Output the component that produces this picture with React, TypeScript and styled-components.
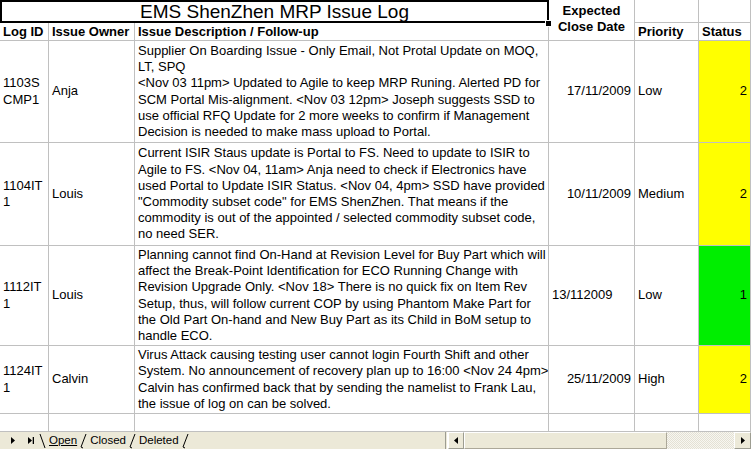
import React from 'react';
import styled, { createGlobalStyle } from 'styled-components';

const GlobalStyle = createGlobalStyle`
  html, body { margin: 0; padding: 0; background: #fff; overflow: hidden; }
  body { font-family: "Liberation Sans", Arial, sans-serif; color: #000; }
`;

const Frame = styled.div`
  width: 751px;
  height: 449px;
  display: flex;
  flex-direction: column;
  overflow: hidden;
  background: #fff;
`;

const Sheet = styled.div`
  display: grid;
  grid-template-columns: 49px 86px 414px 86px 64px 52px;
  grid-template-rows: 23px 18px 102px 103px 100px 68px 18px;
  font-size: 13px;
`;

const Cell = styled.div<{ $align?: 'left' | 'right' | 'center'; $bg?: string; $pad?: number }>`
  box-sizing: border-box;
  border-right: 1px solid #c0c0c0;
  border-bottom: 1px solid #c0c0c0;
  display: flex;
  flex-direction: column;
  justify-content: center;
  align-items: ${(p) => (p.$align === 'right' ? 'flex-end' : p.$align === 'center' ? 'center' : 'flex-start')};
  text-align: ${(p) => p.$align || 'left'};
  padding: 0 ${(p) => p.$pad ?? 3}px;
  background: ${(p) => p.$bg || '#fff'};
  line-height: 16.2px;
  white-space: nowrap;
  overflow: hidden;
`;

const TitleCell = styled.div`
  grid-column: 1 / 4;
  grid-row: 1;
  position: relative;
  box-sizing: border-box;
  border: 2px solid #000;
  display: flex;
  align-items: center;
  justify-content: center;
  font-size: 19px;
  line-height: 19px;
  padding-bottom: 1px;
`;

const Handle = styled.span`
  position: absolute;
  right: -4px;
  bottom: -5px;
  width: 5px;
  height: 5px;
  background: #000;
  border: 1px solid #fff;
  box-sizing: content-box;
  margin: -1px;
`;

const HeadCell = styled(Cell)<{ $span?: boolean }>`
  font-weight: bold;
  justify-content: flex-end;
  line-height: 16px;
  padding-bottom: 0px;
  ${(p) => (p.$span ? 'grid-column: 4; grid-row: 1 / 3; justify-content: center; padding-bottom: 2px;' : '')}
`;

const Line = styled.span`
  display: block;
`;

const TabBar = styled.div`
  height: 17px;
  display: flex;
  align-items: stretch;
  background: #ece9d8;
  font-size: 11.5px;
`;

const NavArea = styled.div`
  width: 38px;
  display: flex;
  align-items: center;
  gap: 13px;
  padding-left: 11px;
  box-sizing: border-box;
`;

const TabStrip = styled.div`
  display: flex;
  align-items: center;
  flex: 0 0 407px;
`;

const Tab = styled.span<{ $active?: boolean }>`
  padding: 0 2px 0 3px;
  text-decoration: ${(p) => (p.$active ? 'underline' : 'none')};
  line-height: 15px;
`;

const Splitter = styled.div`
  width: 3px;
  border-left: 1px solid #9d9d91;
  border-right: 1px solid #fff;
  box-sizing: border-box;
`;

const ScrollButton = styled.div<{ $w: number }>`
  width: ${(p) => p.$w}px;
  box-sizing: border-box;
  display: flex;
  align-items: center;
  justify-content: center;
  background: #ece9d8;
  border: 1px solid #fff;
  border-right-color: #9d9d91;
  border-bottom-color: #9d9d91;
`;

const Thumb = styled.div`
  width: 203px;
  box-sizing: border-box;
  background: #ece9d8;
  border: 1px solid #fff;
  border-right-color: #aca899;
  border-bottom-color: #aca899;
`;

const Track = styled.div`
  flex: 1;
  background-color: #f4f3ee;
  background-image: repeating-conic-gradient(#e4e1d4 0 25%, #f7f6f1 0 50%);
  background-size: 2px 2px;
`;

type Row = {
  id: string[];
  owner: string;
  desc: string[];
  date: string;
  dateRight: boolean;
  priority: string;
  status: number;
  color: string;
};

const rows: Row[] = [
  {
    id: ['1103S', 'CMP1'],
    owner: 'Anja',
    desc: [
      'Supplier On Boarding Issue - Only Email, Not Protal Update on MOQ,',
      'LT, SPQ',
      '<Nov 03 11pm> Updated to Agile to keep MRP Runing. Alerted PD for',
      'SCM Portal Mis-alignment. <Nov 03 12pm> Joseph suggests SSD to',
      'use official RFQ Update for 2 more weeks to confirm if Management',
      'Decision is needed to make mass upload to Portal.',
    ],
    date: '17/11/2009',
    dateRight: true,
    priority: 'Low',
    status: 2,
    color: '#ffff00',
  },
  {
    id: ['1104IT', '1'],
    owner: 'Louis',
    desc: [
      'Current ISIR Staus update is Portal to FS. Need to update to ISIR to',
      'Agile to FS. <Nov 04, 11am> Anja need to check if Electronics have',
      'used Portal to Update ISIR Status. <Nov 04, 4pm> SSD have provided',
      '"Commodity subset code" for EMS ShenZhen. That means if the',
      'commodity is out of the appointed / selected commodity subset code,',
      'no need SER.',
    ],
    date: '10/11/2009',
    dateRight: true,
    priority: 'Medium',
    status: 2,
    color: '#ffff00',
  },
  {
    id: ['1112IT', '1'],
    owner: 'Louis',
    desc: [
      'Planning cannot find On-Hand at Revision Level for Buy Part which will',
      'affect the Break-Point Identification for ECO Running Change with',
      'Revision Upgrade Only. <Nov 18> There is no quick fix on Item Rev',
      'Setup, thus, will follow current COP by using Phantom Make Part for',
      'the Old Part On-hand and New Buy Part as its Child in BoM setup to',
      'handle ECO.',
    ],
    date: '13/112009',
    dateRight: false,
    priority: 'Low',
    status: 1,
    color: '#00ee00',
  },
  {
    id: ['1124IT', '1'],
    owner: 'Calvin',
    desc: [
      'Virus Attack causing testing user cannot login Fourth Shift and other',
      'System. No announcement of recovery plan up to 16:00 <Nov 24 4pm>',
      'Calvin has confirmed back that by sending the namelist to Frank Lau,',
      'the issue of log on can be solved.',
    ],
    date: '25/11/2009',
    dateRight: true,
    priority: 'High',
    status: 2,
    color: '#ffff00',
  },
];

const Tri = ({ dir, bar }: { dir: 'l' | 'r'; bar?: boolean }) => (
  <svg width={bar ? 6 : 4} height="7" viewBox={bar ? '0 0 6 7' : '0 0 4 7'}>
    {dir === 'r' ? <path d="M0 0 L4 3.5 L0 7 Z" fill="#000" /> : <path d="M4 0 L0 3.5 L4 7 Z" fill="#000" />}
    {bar && <rect x="4.7" y="0" width="1.3" height="7" fill="#000" />}
  </svg>
);

const Slant = ({ back }: { back?: boolean }) => (
  <svg width="8" height="16" viewBox="0 0 8 16">
    {back ? (
      <path d="M2 1 L7 15" stroke="#000" strokeWidth="1" fill="none" />
    ) : (
      <path d="M7 1 L2 14 L4 15" stroke="#000" strokeWidth="1" fill="none" />
    )}
  </svg>
);

export default function App() {
  return (
    <>
      <GlobalStyle />
      <Frame>
        <Sheet>
          <TitleCell>
            EMS ShenZhen MRP Issue Log
            <Handle />
          </TitleCell>
          <HeadCell $align="center" $span>
            <Line>Expected</Line>
            <Line>Close Date</Line>
          </HeadCell>
          <Cell />
          <Cell />

          <HeadCell>Log ID</HeadCell>
          <HeadCell>Issue Owner</HeadCell>
          <HeadCell>Issue Description / Follow-up</HeadCell>
          <HeadCell>Priority</HeadCell>
          <HeadCell>Status</HeadCell>

          {rows.map((r) => (
            <React.Fragment key={r.id.join('')}>
              <Cell>
                {r.id.map((l) => (
                  <Line key={l}>{l}</Line>
                ))}
              </Cell>
              <Cell>{r.owner}</Cell>
              <Cell>
                {r.desc.map((l, i) => (
                  <Line key={i}>{l}</Line>
                ))}
              </Cell>
              <Cell $align={r.dateRight ? 'right' : 'left'}>{r.date}</Cell>
              <Cell>{r.priority}</Cell>
              <Cell $align="right" $bg={r.color}>
                {r.status}
              </Cell>
            </React.Fragment>
          ))}

          <Cell />
          <Cell />
          <Cell />
          <Cell />
          <Cell />
          <Cell />
        </Sheet>
        <TabBar>
          <NavArea>
            <Tri dir="r" />
            <Tri dir="r" bar />
          </NavArea>
          <TabStrip>
            <Slant back />
            <Tab $active>Open</Tab>
            <Slant />
            <Tab>Closed</Tab>
            <Slant />
            <Tab>Deleted</Tab>
            <Slant />
          </TabStrip>
          <Splitter />
          <ScrollButton $w={16}>
            <Tri dir="l" />
          </ScrollButton>
          <Thumb />
          <Track />
          <ScrollButton $w={17}>
            <Tri dir="r" />
          </ScrollButton>
        </TabBar>
      </Frame>
    </>
  );
}
